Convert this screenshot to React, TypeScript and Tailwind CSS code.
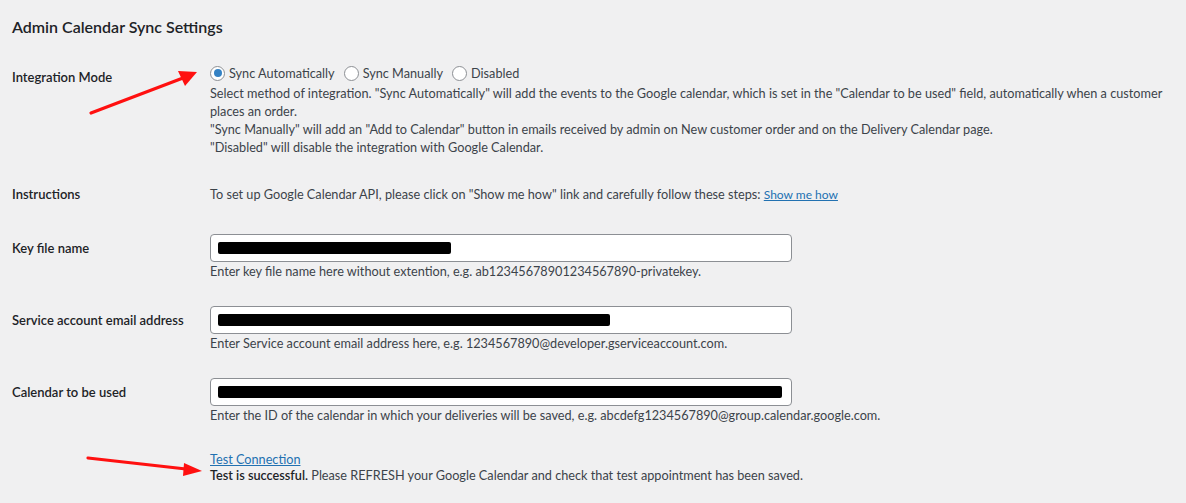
import React from "react";

const font = { fontFamily: 'Lato, "Open Sans", sans-serif' };

function Radio({ checked, label }: { checked?: boolean; label: string }) {
  return (
    <label className="flex items-center gap-[4px] mr-[9px]">
      <span className="w-[15px] h-[15px] rounded-full border border-[#8c8f94] bg-white flex items-center justify-center">
        {checked && <span className="w-[8px] h-[8px] rounded-full bg-[#3582c4]" />}
      </span>
      <span>{label}</span>
    </label>
  );
}

function Redacted({ w }: { w: number }) {
  return (
    <div className="h-[12px] bg-black rounded-[2px]" style={{ width: w }} />
  );
}

function Field({
  label,
  hint,
  redact,
  mt,
}: {
  label: string;
  hint: string;
  redact: number;
  mt: string;
}) {
  return (
    <div className={`flex ${mt}`}>
      <div className="w-[198px] shrink-0 whitespace-nowrap text-[13px] font-semibold text-[#1d2327] leading-[28px]">
        {label}
      </div>
      <div>
        <div className="w-[582px] h-[28px] border border-[#8c8f94] rounded-[4px] bg-white flex items-center px-[7px]">
          <Redacted w={redact} />
        </div>
        <div className="text-[12.7px] leading-[18px] text-[#3c434a]">{hint}</div>
      </div>
    </div>
  );
}

export default function App() {
  return (
    <div
      className="relative w-[1186px] h-[503px] bg-[#f0f0f1] overflow-hidden pl-[12px] text-[#3c434a]"
      style={font}
    >
      <h2 className="pt-[16px] text-[16px] leading-[22px] font-semibold text-[#1d2327]">
        Admin Calendar Sync Settings
      </h2>

      {/* Integration Mode */}
      <div className="flex mt-[25px]">
        <div className="w-[198px] shrink-0 pt-[4px] text-[13px] leading-[20px] font-semibold text-[#1d2327]">
          Integration Mode
        </div>
        <div className="text-[12.7px]">
          <div className="flex items-center h-[20px] leading-[20px]">
            <Radio checked label="Sync Automatically" />
            <Radio label="Sync Manually" />
            <Radio label="Disabled" />
          </div>
          <div className="mt-[1px] leading-[18px] whitespace-nowrap">
            Select method of integration. "Sync Automatically" will add the events to the Google calendar, which is set in the "Calendar to be used" field, automatically when a customer
            <br />
            places an order.
            <br />
            "Sync Manually" will add an "Add to Calendar" button in emails received by admin on New customer order and on the Delivery Calendar page.
            <br />
            "Disabled" will disable the integration with Google Calendar.
          </div>
        </div>
      </div>

      {/* Instructions */}
      <div className="flex mt-[28px]">
        <div className="w-[198px] shrink-0 text-[13px] leading-[20px] font-semibold text-[#1d2327]">
          Instructions
        </div>
        <div className="text-[12.7px] leading-[20px]">
          To set up Google Calendar API, please click on "Show me how" link and carefully follow these steps:{" "}
          <a className="text-[#2271b1] underline text-[12px]" href="#">
            Show me how
          </a>
        </div>
      </div>

      <Field
        mt="mt-[29px]"
        label="Key file name"
        hint="Enter key file name here without extention, e.g. ab12345678901234567890-privatekey."
        redact={233}
      />
      <Field
        mt="mt-[26px]"
        label="Service account email address"
        hint="Enter Service account email address here, e.g. 1234567890@developer.gserviceaccount.com."
        redact={392}
      />
      <Field
        mt="mt-[26px]"
        label="Calendar to be used"
        hint="Enter the ID of the calendar in which your deliveries will be saved, e.g. abcdefg1234567890@group.calendar.google.com."
        redact={564}
      />

      {/* Test connection */}
      <div className="mt-[27px] pl-[198px] text-[12.7px] leading-[16px]">
        <a href="#" className="text-[#2271b1] underline">
          Test Connection
        </a>
        <div>
          <span className="font-semibold text-[#1d2327]">Test is successful.</span> Please REFRESH your Google
          Calendar and check that test appointment has been saved.
        </div>
      </div>

      {/* Red arrows overlay */}
      <svg
        className="absolute left-0 top-0 pointer-events-none"
        width="1186"
        height="503"
        viewBox="0 0 1186 503"
      >
        <line x1="91" y1="113" x2="183" y2="78" stroke="#ff1010" strokeWidth="3.2" strokeLinecap="round" />
        <polygon points="197,72 178,71 185,86" fill="#ff1010" />
        <line x1="88" y1="458" x2="186" y2="469" stroke="#ff1010" strokeWidth="3.2" strokeLinecap="round" />
        <polygon points="202,471 184,463 183,476" fill="#ff1010" />
      </svg>
    </div>
  );
}
